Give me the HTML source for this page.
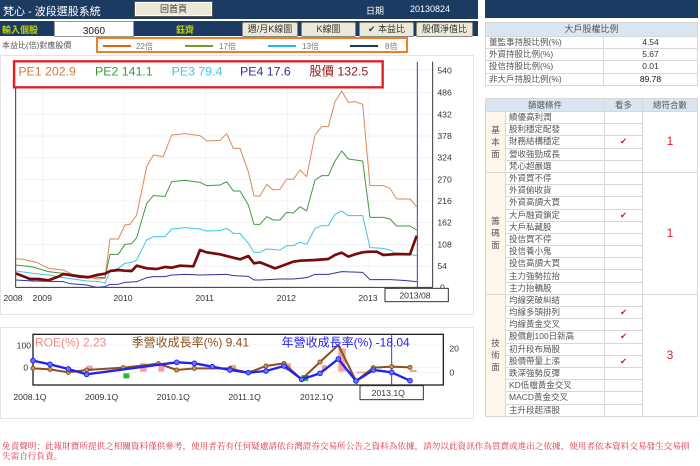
<!DOCTYPE html>
<html><head><meta charset="utf-8"><style>
*{margin:0;padding:0;box-sizing:border-box}
body{width:700px;height:466px;background:#fff;position:relative;overflow:hidden;font-family:"Liberation Sans","Noto Sans CJK TC",sans-serif;font-size:9px;color:#333}
.a{position:absolute}
.btn{position:absolute;top:22px;height:15px;background:#ece9d8;border:1px solid #888;border-radius:2px;font-size:9px;text-align:center;line-height:13px;color:#333}
table{border-collapse:collapse}
td{border:1px solid #d8d8d8;font-size:8.5px;height:12.2px;padding:0 3px;color:#555;line-height:11px}
</style></head><body>
<div class="a" style="left:0;top:0;width:478px;height:19px;background:#1c3b63"></div>
<div class="a" style="left:3px;top:3px;color:#fff;font-size:11px">梵心 - 波段選股系統</div>
<div class="a" style="left:135px;top:2px;width:77px;height:14px;background:#ece9d8;border:1px solid #fff;outline:1px solid #555;font-size:9px;text-align:center;line-height:12px">回首頁</div>
<div class="a" style="left:366px;top:4px;color:#fff;font-size:9px">日期</div>
<div class="a" style="left:410px;top:4px;color:#fff;font-size:9px">20130824</div>
<div class="a" style="left:0;top:21px;width:478px;height:15px;background:#1c3b63"></div>
<div class="a" style="left:2px;top:23px;color:#c7d400;font-size:9px;font-weight:bold">輸入個股</div>
<div class="a" style="left:54px;top:21px;width:80px;height:16px;background:#fff;border:1px solid #999;text-align:center;font-size:10px;line-height:20px;color:#222">3060</div>
<div class="a" style="left:176px;top:23px;color:#c7d400;font-size:9px;font-weight:bold">鈺齊</div>
<div class="btn" style="left:242px;width:56px">週/月K線圖</div>
<div class="btn" style="left:301px;width:55px">K線圖</div>
<div class="btn" style="left:359px;width:55px">✔ 本益比</div>
<div class="btn" style="left:416px;width:57px">股價淨值比</div>
<div class="a" style="left:2px;top:40px;font-size:8px;color:#555">本益比(倍)對應股價</div>
<div class="a" style="left:96px;top:37px;width:312px;height:16px;border:2px solid #f07f22"></div>
<div class="a" style="left:103px;top:45px;width:28px;height:2px;background:#e06010"></div><div class="a" style="left:136px;top:41px;font-size:8px;color:#777">22倍</div>
<div class="a" style="left:185px;top:45px;width:28px;height:2px;background:#7a9a2a"></div><div class="a" style="left:219px;top:41px;font-size:8px;color:#777">17倍</div>
<div class="a" style="left:268px;top:45px;width:28px;height:2px;background:#20b8e8"></div><div class="a" style="left:302px;top:41px;font-size:8px;color:#777">13倍</div>
<div class="a" style="left:350px;top:45px;width:28px;height:2px;background:#1c3b63"></div><div class="a" style="left:385px;top:41px;font-size:8px;color:#777">8倍</div>

<div class="a" style="left:0;top:55px;width:474px;height:260px;border:1px solid #e4e4e4"></div>
<svg class="a" style="left:0;top:55px" width="470" height="260" viewBox="0 0 1410 780">
<g stroke="#ddd" stroke-width="2" stroke-dasharray="4,4">
<line x1="47" y1="45" x2="1298" y2="45"/><line x1="47" y1="112" x2="1298" y2="112"/><line x1="47" y1="178" x2="1298" y2="178"/><line x1="47" y1="243" x2="1298" y2="243"/><line x1="47" y1="308" x2="1298" y2="308"/><line x1="47" y1="373" x2="1298" y2="373"/><line x1="47" y1="438" x2="1298" y2="438"/><line x1="47" y1="503" x2="1298" y2="503"/><line x1="47" y1="568" x2="1298" y2="568"/><line x1="47" y1="633" x2="1298" y2="633"/>
<line x1="127" y1="20" x2="127" y2="697"/><line x1="372" y1="20" x2="372" y2="697"/><line x1="618" y1="20" x2="618" y2="697"/><line x1="862" y1="20" x2="862" y2="697"/><line x1="1107" y1="20" x2="1107" y2="697"/>
</g>
<line x1="47" y1="697" x2="1298" y2="697" stroke="#333" stroke-width="3"/>
<line x1="47" y1="20" x2="47" y2="697" stroke="#333" stroke-width="3"/>
<line x1="1298" y1="20" x2="1298" y2="697" stroke="#333" stroke-width="3"/>
<line x1="1252" y1="20" x2="1252" y2="697" stroke="#3344aa" stroke-width="3"/>
<g fill="none" stroke-width="3" stroke-linejoin="round">
<polyline stroke="#e0855a" points="47,612 65,612 110,622 145,640 190,645 220,660 260,665 290,672 315,670 330,552 355,552 375,510 390,508 410,480 440,335 460,300 490,305 515,240 555,236 600,242 620,258 660,256 680,236 700,280 720,280 745,350 762,423 780,423 800,388 820,405 840,403 860,372 880,373 900,345 920,365 945,240 965,215 985,215 1005,140 1025,108 1045,142 1065,140 1088,148 1110,392 1150,392 1170,400 1190,432 1230,432 1250,455"/>
<polyline stroke="#3f9a3f" points="47,630 100,636 145,650 190,655 300,668 315,668 330,598 355,598 375,568 395,566 410,548 440,445 460,422 495,424 515,380 555,376 600,382 620,392 660,390 680,380 700,408 720,408 745,450 762,508 780,508 800,485 820,495 840,495 860,472 880,474 900,455 920,468 945,375 965,362 985,362 1005,318 1025,288 1045,312 1088,318 1110,487 1150,487 1170,492 1190,513 1230,513 1250,525"/>
<polyline stroke="#3cc4ee" points="47,648 100,655 145,660 190,668 260,678 300,680 315,685 330,648 355,640 375,625 395,622 410,615 440,555 460,545 495,545 515,522 555,518 600,522 620,528 660,527 680,520 700,535 720,535 745,565 762,592 780,592 800,582 840,585 860,572 880,572 900,562 920,568 945,520 965,512 985,512 1005,478 1025,468 1045,482 1088,482 1110,578 1150,580 1170,585 1190,598 1230,598 1250,602"/>
<polyline stroke="#33339a" points="47,675 100,678 190,680 210,686 260,690 290,697 315,695 330,688 355,688 375,682 410,680 440,668 460,665 495,665 515,660 555,658 600,660 680,658 700,662 745,664 762,675 780,675 840,672 880,672 920,668 945,658 985,658 1025,650 1088,652 1110,674 1170,674 1210,676 1250,680"/>
<polyline stroke="#7a0a0a" stroke-width="8" points="47,655 65,662 90,672 115,672 145,676 175,665 190,657 210,660 240,665 265,667 290,660 315,656 330,648 355,645 375,647 395,648 410,632 440,640 470,642 495,636 515,638 540,632 580,634 600,585 620,592 660,598 700,608 720,613 745,603 762,625 780,622 800,630 825,640 845,633 880,620 900,617 945,615 985,612 1005,600 1025,593 1045,605 1065,598 1088,592 1110,590 1130,590 1150,600 1190,597 1230,598 1250,542"/>
</g>
<g font-size="26" fill="#333" font-family="Liberation Sans,sans-serif">
<text x="1312" y="55">540</text><text x="1312" y="121">486</text><text x="1312" y="187">432</text><text x="1312" y="252">378</text><text x="1312" y="317">324</text><text x="1312" y="382">270</text><text x="1312" y="447">216</text><text x="1312" y="512">162</text><text x="1312" y="577">108</text><text x="1312" y="642">54</text><text x="1320" y="707">0</text>
<text x="10" y="738">2008</text><text x="98" y="738">2009</text><text x="340" y="738">2010</text><text x="586" y="738">2011</text><text x="830" y="738">2012</text><text x="1075" y="738">2013</text>
</g>
<rect x="1155" y="700" width="190" height="40" fill="#fff" stroke="#333" stroke-width="3"/>
<text x="1198" y="730" font-size="26" fill="#333">2013/08</text>
<rect x="42" y="19" width="1106" height="78" fill="rgba(255,255,255,0.85)" stroke="#e21f26" stroke-width="7"/>
<g font-size="37" font-family="Liberation Sans,'Noto Sans CJK TC',sans-serif">
<text x="55" y="62" fill="#d9773e">PE1 202.9</text><text x="285" y="62" fill="#3a9a3a">PE2 141.1</text><text x="515" y="62" fill="#45c2ee">PE3 79.4</text><text x="720" y="62" fill="#333399">PE4 17.6</text><text x="928" y="62" fill="#8a1a1a">股價 132.5</text>
</g>
</svg>

<div class="a" style="left:0;top:327px;width:474px;height:92px;border:1px solid #e4e4e4"></div>
<svg class="a" style="left:0;top:320px" width="480" height="100" viewBox="0 0 1440 300">
<line x1="99" y1="75" x2="1330" y2="75" stroke="#ddd" stroke-width="2" stroke-dasharray="4,4"/>
<line x1="99" y1="143" x2="1330" y2="143" stroke="#ddd" stroke-width="2" stroke-dasharray="4,4"/>
<line x1="99" y1="157" x2="1330" y2="157" stroke="#ddd" stroke-width="2" stroke-dasharray="4,4"/>
<g fill="#f2a0a8"><rect x="260" y="137" width="18" height="16"/><rect x="420" y="130" width="20" height="25"/><rect x="475" y="135" width="18" height="20"/><rect x="690" y="135" width="18" height="16"/><rect x="855" y="130" width="18" height="22"/><rect x="965" y="135" width="15" height="18"/><rect x="1015" y="85" width="22" height="70"/><rect x="1070" y="155" width="40" height="5"/><rect x="1230" y="150" width="20" height="6"/></g>
<rect x="370" y="160" width="18" height="15" fill="#22bb33"/><rect x="905" y="165" width="20" height="18" fill="#22bb33"/>
<rect x="99" y="43" width="1231" height="152" fill="none" stroke="#222" stroke-width="4"/>
<line x1="1175" y1="43" x2="1175" y2="200" stroke="#3344aa" stroke-width="3"/>
<polyline fill="none" stroke="#8a5020" stroke-width="6" points="99,145 150,148 205,157 260,150 370,143 475,131 530,150 583,145 637,145 690,145 745,158 798,138 852,130 905,178 960,126 1015,75 1068,183 1120,143 1175,140 1230,142"/>
<g fill="#c89a60" stroke="#8a5020" stroke-width="3"><circle cx="99" cy="145" r="6"/><circle cx="150" cy="148" r="6"/><circle cx="205" cy="157" r="6"/><circle cx="260" cy="150" r="6"/><circle cx="370" cy="143" r="6"/><circle cx="475" cy="131" r="6"/><circle cx="530" cy="150" r="6"/><circle cx="583" cy="145" r="6"/><circle cx="690" cy="145" r="6"/><circle cx="798" cy="138" r="6"/><circle cx="852" cy="130" r="6"/><circle cx="960" cy="126" r="6"/><circle cx="1120" cy="143" r="6"/><circle cx="1175" cy="140" r="6"/><circle cx="1230" cy="142" r="6"/></g>
<polyline fill="none" stroke="#2222ee" stroke-width="7" points="99,122 150,133 205,147 260,163 530,127 583,130 637,140 690,150 745,158 798,153 852,138 905,178 960,160 1015,117 1068,183 1120,150 1175,157 1230,182"/>
<g fill="#6677ff" stroke="#2222ee" stroke-width="3"><circle cx="99" cy="122" r="7"/><circle cx="150" cy="133" r="7"/><circle cx="205" cy="147" r="7"/><circle cx="260" cy="163" r="7"/><circle cx="530" cy="127" r="7"/><circle cx="583" cy="130" r="7"/><circle cx="637" cy="140" r="7"/><circle cx="690" cy="150" r="7"/><circle cx="745" cy="158" r="7"/><circle cx="798" cy="153" r="7"/><circle cx="852" cy="138" r="7"/><circle cx="905" cy="178" r="7"/><circle cx="960" cy="160" r="7"/><circle cx="1015" cy="117" r="7"/><circle cx="1068" cy="183" r="7"/><circle cx="1120" cy="150" r="7"/><circle cx="1175" cy="157" r="7"/><circle cx="1230" cy="182" r="7"/></g>
<g font-size="26" fill="#333"><text x="50" y="85">100</text><text x="70" y="152">0</text><text x="1348" y="95">20</text><text x="1348" y="167">0</text>
<text x="40" y="240">2008.1Q</text><text x="255" y="240">2009.1Q</text><text x="470" y="240">2010.1Q</text><text x="685" y="240">2011.1Q</text><text x="900" y="240">2012.1Q</text></g>
<rect x="1080" y="197" width="190" height="42" fill="#fff" stroke="#333" stroke-width="3"/>
<text x="1115" y="228" font-size="26" fill="#333">2013.1Q</text>
<g font-size="36" font-family="Liberation Sans,'Noto Sans CJK TC',sans-serif"><text x="105" y="80" fill="#f08a8a">ROE(%) 2.23</text><text x="395" y="80" fill="#8a5020">季營收成長率(%) 9.41</text><text x="845" y="80" fill="#2222ee">年營收成長率(%) -18.04</text></g>
</svg>

<div class="a" style="left:2px;top:441px;width:696px;font-family:'Liberation Serif','Noto Serif CJK SC',serif;font-size:8.6px;line-height:10px;color:#e03040">免責聲明：此報財寶所提供之相關資料僅供參考，使用者若有任何疑慮請依台灣證券交易所公告之資料為依據，請勿以此資訊作為買賣或進出之依據，使用者依本資料交易發生交易損失需自行負責。</div>

<div class="a" style="left:485px;top:0;width:213px;height:18px;background:#1c3b63"></div>
<table class="a" style="left:485px;top:22px;width:213px">
<tr><td colspan="2" style="background:#dbe5f1;text-align:center;font-size:9px;height:14px">大戶股權比例</td></tr>
<tr><td style="width:118px">董監事持股比例(%)</td><td style="text-align:center;color:#333">4.54</td></tr>
<tr><td>外資持股比例(%)</td><td style="text-align:center;color:#333">5.67</td></tr>
<tr><td>投信持股比例(%)</td><td style="text-align:center;color:#333">0.01</td></tr>
<tr><td>非大戶持股比例(%)</td><td style="text-align:center;color:#111">89.78</td></tr>
</table>
<table class="a" style="left:485px;top:98px;width:213px">
<tr><td colspan="2" style="background:#dbe5f1;text-align:center;height:13px">篩選條件</td><td style="background:#dbe5f1;text-align:center;width:38px">看多</td><td style="background:#dbe5f1;text-align:center;width:55px">總符合數</td></tr>
<tr><td rowspan="5" style="background:#fdf7ea;width:20px;text-align:center;line-height:12px">基<br>本<br>面</td><td>績優高利潤</td><td></td><td rowspan="5" style="text-align:center;color:#e0202a;font-size:12px">1</td></tr>
<tr><td>股利穩定配發</td><td></td></tr>
<tr><td>財務結構穩定</td><td style="text-align:center;color:#d02020">✔</td></tr>
<tr><td>營收強勁成長</td><td></td></tr>
<tr><td>梵心超嚴選</td><td></td></tr>
<tr><td rowspan="10" style="background:#fdf7ea;text-align:center;line-height:12px">籌<br>碼<br>面</td><td>外資買不停</td><td></td><td rowspan="10" style="text-align:center;color:#e0202a;font-size:12px">1</td></tr>
<tr><td>外資偷收貨</td><td></td></tr>
<tr><td>外資高調大買</td><td></td></tr>
<tr><td>大戶融資鎖定</td><td style="text-align:center;color:#d02020">✔</td></tr>
<tr><td>大戶私藏股</td><td></td></tr>
<tr><td>投信買不停</td><td></td></tr>
<tr><td>投信養小鬼</td><td></td></tr>
<tr><td>投信高調大買</td><td></td></tr>
<tr><td>主力強勢拉抬</td><td></td></tr>
<tr><td>主力抬轎股</td><td></td></tr>
<tr><td rowspan="10" style="background:#fdf7ea;text-align:center;line-height:12px">技<br>術<br>面</td><td>均線突破糾結</td><td></td><td rowspan="10" style="text-align:center;color:#e0202a;font-size:12px">3</td></tr>
<tr><td>均線多頭排列</td><td style="text-align:center;color:#d02020">✔</td></tr>
<tr><td>均線黃金交叉</td><td></td></tr>
<tr><td>股價創100日新高</td><td style="text-align:center;color:#d02020">✔</td></tr>
<tr><td>初升段布局股</td><td></td></tr>
<tr><td>股價帶量上漲</td><td style="text-align:center;color:#d02020">✔</td></tr>
<tr><td>跌深強勢反彈</td><td></td></tr>
<tr><td>KD低檔黃金交叉</td><td></td></tr>
<tr><td>MACD黃金交叉</td><td></td></tr>
<tr><td>主升段起漲股</td><td></td></tr>
</table>
</body></html>
